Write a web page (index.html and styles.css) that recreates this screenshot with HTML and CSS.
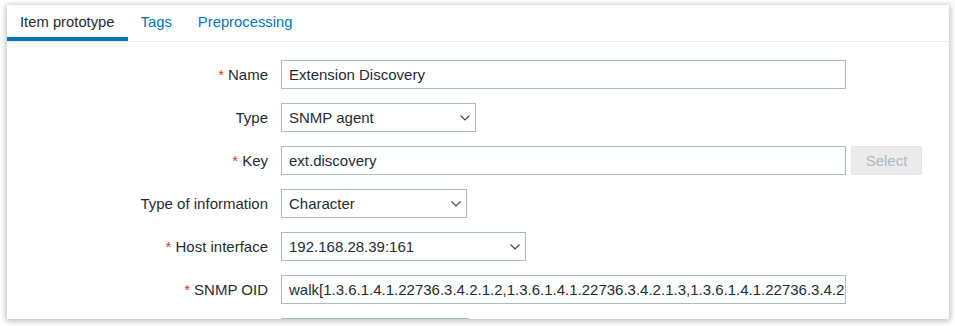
FILE: index.html
```html
<!DOCTYPE html>
<html>
    <head>
        <link rel="stylesheet" href="styles.css">
    </head>
    <body>
        <div class="panel">
            <ul class="tabs">
                <li class="tab active">Item prototype</li>
                <li class="tab">Tags</li>
                <li class="tab">Preprocessing</li>
            </ul>
            <div class="form">
                <label class="required">Name</label>
                <div class="field"><div class="textbox wide">Extension Discovery</div></div>

                <label>Type</label>
                <div class="field">
                    <div class="select w-type">
                        <span>SNMP agent</span>
                        <svg width="10" height="6" viewBox="0 0 10 6"><path d="M0.5 0.5 L5 5 L9.5 0.5" fill="none" stroke="#3c474e" stroke-width="1.1"/></svg>
                    </div>
                </div>

                <label class="required">Key</label>
                <div class="field">
                    <div class="textbox wide">ext.discovery</div>
                    <div class="button disabled">Select</div>
                </div>

                <label>Type of information</label>
                <div class="field">
                    <div class="select w-info">
                        <span>Character</span>
                        <svg width="10" height="6" viewBox="0 0 10 6"><path d="M0.5 0.5 L5 5 L9.5 0.5" fill="none" stroke="#3c474e" stroke-width="1.1"/></svg>
                    </div>
                </div>

                <label class="required">Host interface</label>
                <div class="field">
                    <div class="select w-host">
                        <span>192.168.28.39:161</span>
                        <svg width="10" height="6" viewBox="0 0 10 6"><path d="M0.5 0.5 L5 5 L9.5 0.5" fill="none" stroke="#3c474e" stroke-width="1.1"/></svg>
                    </div>
                </div>

                <label class="required">SNMP OID</label>
                <div class="field"><div class="textbox wide">walk[1.3.6.1.4.1.22736.3.4.2.1.2,1.3.6.1.4.1.22736.3.4.2.1.3,1.3.6.1.4.1.22736.3.4.2.1.4]</div></div>

                <label></label>
                <div class="field"><div class="textbox w-next"></div></div>
            </div>
        </div>
    </body>
</html>
```
FILE: styles.css
```css
html, body {
    margin: 0;
    height: 326px;
    overflow: hidden;
    background-color: #FFFFFF;
    font-family: "Liberation Sans", Arial, sans-serif;
    font-size: 15px;
    color: #1F2C33;
}

.panel {
    margin: 5px 6px 0 7px;
    height: 314px;
    overflow: hidden;
    background-color: #FFFFFF;
    box-shadow: 0 1px 6px 1px rgba(0,0,0,0.28);
}

.tabs {
    display: flex;
    margin: 0;
    padding: 0;
    list-style: none;
    border-bottom: 1px solid #EBEEF0;
}

.tab {
    padding: 0 13px;
    height: 36px;
    line-height: 34px;
    font-size: 14.8px;
    color: #0275B8;
    border-bottom: 4px solid transparent;
    box-sizing: border-box;
}

.tab.active {
    color: #1F2C33;
    border-bottom-color: #0275B8;
}

.form {
    display: grid;
    grid-template-columns: 261px 1fr;
    grid-auto-rows: 29px;
    column-gap: 13px;
    row-gap: 14px;
    padding-top: 18px;
}

.form label {
    display: flex;
    align-items: center;
    justify-content: flex-end;
    white-space: nowrap;
}

.form label.required::before {
    content: "*";
    color: #E33734;
    margin-right: 4px;
}

.field {
    display: flex;
    gap: 5px;
}

.textbox, .select {
    box-sizing: border-box;
    height: 29px;
    border: 1px solid #ACBBC2;
    padding: 0 7px;
    display: flex;
    align-items: center;
    white-space: nowrap;
    overflow: hidden;
    color: #1F2C33;
}

.wide {
    width: 565px;
}

.select {
    justify-content: space-between;
    padding-right: 5px;
}

.select svg {
    flex: none;
}

.w-type {
    width: 195px;
}

.w-info {
    width: 186px;
}

.w-host {
    width: 245px;
}

.w-next {
    width: 188px;
}

.button {
    box-sizing: border-box;
    width: 71px;
    height: 29px;
    border: 1px solid #DFE4E7;
    border-radius: 2px;
    background-color: #EBEBEB;
    color: #ACBBC2;
    display: flex;
    align-items: center;
    justify-content: center;
}
```
